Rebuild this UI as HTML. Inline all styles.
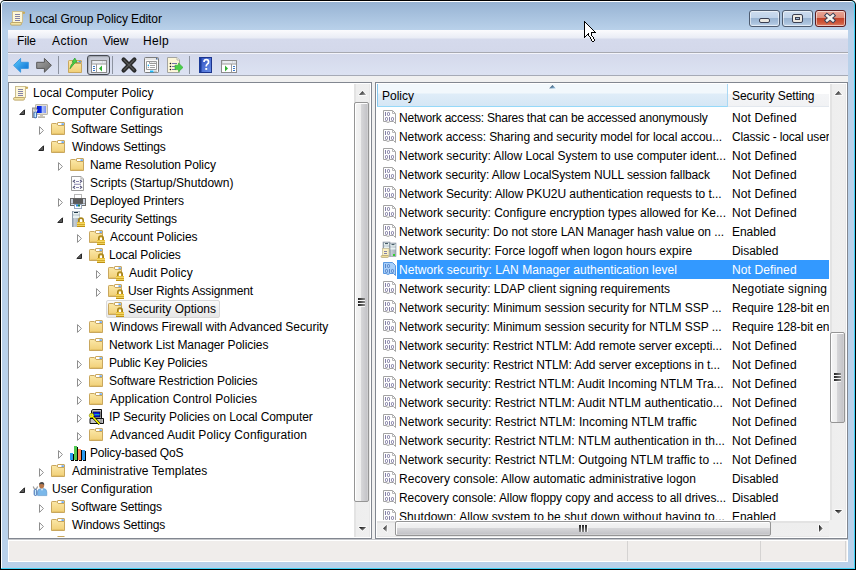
<!DOCTYPE html><html><head><meta charset="utf-8"><style>
*{box-sizing:border-box}
html,body{margin:0;padding:0;width:856px;height:570px;overflow:hidden;background:#fff;font-family:"Liberation Sans", sans-serif;font-size:12px;color:#000}
.a{position:absolute}
.t{position:absolute;white-space:pre;line-height:14px;height:14px}
svg{position:absolute;overflow:visible}

</style></head><body>
<div class="a" style="left:0;top:0;width:856px;height:570px;background:#000;border-radius:5px 5px 0 0"></div>
<div class="a" style="left:1px;top:1px;width:854px;height:568px;background:#40d2f6;border-radius:4px 4px 0 0"></div>
<div class="a" style="left:1px;top:1px;width:853px;height:567px;background:#fff;border-radius:4px 4px 0 0"></div>
<div class="a" style="left:2px;top:2px;width:852px;height:566px;background:#b9d1ea;border-radius:3px 3px 0 0"></div>
<div class="a" style="left:2px;top:2px;width:852px;height:28px;background:linear-gradient(#97b3d3,#b9d1ea);border-radius:3px 3px 0 0"></div>
<svg style="left:10px;top:10px" width="16" height="16"><use href="#i-scroll"/></svg>
<div class="t" style="left:29px;top:12px;letter-spacing:-0.1042px;">Local Group Policy Editor</div>
<div class="a" style="left:749px;top:10px;width:31px;height:17px;border:1px solid #4e5b6f;border-radius:3px;background:linear-gradient(#cddcee 0%,#bfd2e9 47%,#9ab4d2 50%,#a9c1dc 80%,#c2d6ec 100%);box-shadow:inset 0 0 0 1px rgba(255,255,255,0.55)"></div>
<div class="a" style="left:782px;top:10px;width:31px;height:17px;border:1px solid #4e5b6f;border-radius:3px;background:linear-gradient(#cddcee 0%,#bfd2e9 47%,#9ab4d2 50%,#a9c1dc 80%,#c2d6ec 100%);box-shadow:inset 0 0 0 1px rgba(255,255,255,0.55)"></div>
<div class="a" style="left:815px;top:10px;width:31px;height:17px;border:1px solid #5b1c20;border-radius:3px;background:linear-gradient(#eaa697 0%,#dd8b78 47%,#c4432a 50%,#cf5a3e 80%,#e0826a 100%);box-shadow:inset 0 0 0 1px rgba(255,255,255,0.55)"></div>
<div class="a" style="left:759px;top:18px;width:11px;height:5px;border:1px solid #3a3f52;border-radius:2px;background:#ece9e2"></div>
<div class="a" style="left:792px;top:14px;width:11px;height:9px;border:1px solid #3a3f52;border-radius:2px;background:#ece9e2"></div>
<div class="a" style="left:795px;top:17px;width:5px;height:3px;border:1px solid #3a3f52;background:#9fb7d4"></div>
<svg style="left:824px;top:13px" width="12" height="10" viewBox="0 0 12 10"><path d="M3 2.5 L9 7.5 M9 2.5 L3 7.5" stroke="#3b3f55" stroke-width="4.4" stroke-linecap="square"/><path d="M3 2.5 L9 7.5 M9 2.5 L3 7.5" stroke="#f4f2ee" stroke-width="2.4" stroke-linecap="square"/></svg>
<div class="a" style="left:8px;top:30px;width:840px;height:532px;background:#f0f0f0"></div>
<div class="a" style="left:8px;top:30px;width:840px;height:22px;background:linear-gradient(#fbfbfd 0px,#e9ecf5 8px,#d5daec 9px,#d3d8ea 22px)"></div>
<div class="a" style="left:8px;top:52px;width:840px;height:1px;background:#a7a9b0"></div>
<div class="a" style="left:8px;top:53px;width:840px;height:1px;background:#f3f4fa"></div>
<div class="t" style="left:17px;top:34px;letter-spacing:-0.1667px;">File</div>
<div class="t" style="left:52px;top:34px;letter-spacing:0.4000px;">Action</div>
<div class="t" style="left:103px;top:34px;letter-spacing:-0.1667px;">View</div>
<div class="t" style="left:143px;top:34px;letter-spacing:0.3333px;">Help</div>
<div class="a" style="left:8px;top:54px;width:840px;height:21px;background:linear-gradient(#d4d9eb,#dce2f2)"></div>
<div class="a" style="left:8px;top:75px;width:840px;height:1px;background:#a6aab6"></div>
<svg style="left:13px;top:57px" width="16" height="16"><use href="#i-back"/></svg>
<svg style="left:36px;top:57px" width="16" height="16"><use href="#i-fwd"/></svg>
<div class="a" style="left:58px;top:56px;width:1px;height:18px;background:#8d93a0"></div>
<svg style="left:68px;top:57px" width="16" height="16"><use href="#i-up"/></svg>
<div class="a" style="left:87px;top:55px;width:23px;height:20px;border:1px solid #464a52;border-radius:3px;background:linear-gradient(#c2c6d2,#d8dce8);box-shadow:inset 1px 1px 1px rgba(0,0,0,0.18)"></div>
<svg style="left:91px;top:60px" width="16" height="16"><use href="#i-tree"/></svg>
<div class="a" style="left:112px;top:56px;width:1px;height:18px;background:#8d93a0"></div>
<svg style="left:121px;top:57px" width="16" height="16"><use href="#i-delete"/></svg>
<svg style="left:144px;top:57px" width="16" height="16"><use href="#i-props"/></svg>
<svg style="left:167px;top:57px" width="16" height="16"><use href="#i-export"/></svg>
<div class="a" style="left:189px;top:56px;width:1px;height:18px;background:#8d93a0"></div>
<svg style="left:199px;top:57px" width="16" height="16"><use href="#i-help"/></svg>
<svg style="left:221px;top:60px" width="16" height="16"><use href="#i-action"/></svg>
<div class="a" style="left:8px;top:82px;width:364px;height:457px;border:1px solid #828790;background:#fff;overflow:hidden">
<svg style="left:4px;top:2px" width="16" height="16"><use href="#i-scroll"/></svg>
<div class="t" style="left:24px;top:3px;letter-spacing:0.0250px;">Local Computer Policy</div>
<svg style="left:10px;top:26px" width="8" height="8"><path d="M5.5 0.8 V5.5 H0.8 Z" fill="#5a5a5a" stroke="#262626" stroke-linejoin="round"/></svg>
<svg style="left:23px;top:20px" width="16" height="16"><use href="#i-computer"/></svg>
<div class="t" style="left:43px;top:21px;letter-spacing:0.1905px;">Computer Configuration</div>
<svg style="left:29px;top:43px" width="7" height="10"><path d="M1.5 0.6 L5.4 4.5 L1.5 8.4 Z" fill="#fff" stroke="#8e8e8e" stroke-linejoin="round"/></svg>
<svg style="left:42px;top:38px" width="16" height="16"><use href="#i-folder"/></svg>
<div class="t" style="left:62px;top:39px;letter-spacing:-0.1562px;">Software Settings</div>
<svg style="left:29px;top:62px" width="8" height="8"><path d="M5.5 0.8 V5.5 H0.8 Z" fill="#5a5a5a" stroke="#262626" stroke-linejoin="round"/></svg>
<svg style="left:42px;top:56px" width="16" height="16"><use href="#i-folder"/></svg>
<div class="t" style="left:63px;top:57px;letter-spacing:-0.1000px;">Windows Settings</div>
<svg style="left:48px;top:79px" width="7" height="10"><path d="M1.5 0.6 L5.4 4.5 L1.5 8.4 Z" fill="#fff" stroke="#8e8e8e" stroke-linejoin="round"/></svg>
<svg style="left:61px;top:74px" width="16" height="16"><use href="#i-folder"/></svg>
<div class="t" style="left:81px;top:75px;letter-spacing:-0.0714px;">Name Resolution Policy</div>
<svg style="left:61px;top:92px" width="16" height="16"><use href="#i-script"/></svg>
<div class="t" style="left:81px;top:93px;letter-spacing:0.0000px;">Scripts (Startup/Shutdown)</div>
<svg style="left:48px;top:115px" width="7" height="10"><path d="M1.5 0.6 L5.4 4.5 L1.5 8.4 Z" fill="#fff" stroke="#8e8e8e" stroke-linejoin="round"/></svg>
<svg style="left:61px;top:110px" width="16" height="16"><use href="#i-printer"/></svg>
<div class="t" style="left:81px;top:111px;letter-spacing:-0.0937px;">Deployed Printers</div>
<svg style="left:48px;top:134px" width="8" height="8"><path d="M5.5 0.8 V5.5 H0.8 Z" fill="#5a5a5a" stroke="#262626" stroke-linejoin="round"/></svg>
<svg style="left:61px;top:128px" width="16" height="16"><use href="#i-secset"/></svg>
<div class="t" style="left:81px;top:129px;letter-spacing:-0.1875px;">Security Settings</div>
<svg style="left:67px;top:151px" width="7" height="10"><path d="M1.5 0.6 L5.4 4.5 L1.5 8.4 Z" fill="#fff" stroke="#8e8e8e" stroke-linejoin="round"/></svg>
<svg style="left:80px;top:146px" width="16" height="16"><use href="#i-lockfolder"/></svg>
<div class="t" style="left:101px;top:147px;letter-spacing:-0.0333px;">Account Policies</div>
<svg style="left:67px;top:170px" width="8" height="8"><path d="M5.5 0.8 V5.5 H0.8 Z" fill="#5a5a5a" stroke="#262626" stroke-linejoin="round"/></svg>
<svg style="left:80px;top:164px" width="16" height="16"><use href="#i-lockfolder"/></svg>
<div class="t" style="left:100px;top:165px;letter-spacing:-0.1154px;">Local Policies</div>
<svg style="left:86px;top:187px" width="7" height="10"><path d="M1.5 0.6 L5.4 4.5 L1.5 8.4 Z" fill="#fff" stroke="#8e8e8e" stroke-linejoin="round"/></svg>
<svg style="left:99px;top:182px" width="16" height="16"><use href="#i-lockfolder"/></svg>
<div class="t" style="left:120px;top:183px;letter-spacing:0.0909px;">Audit Policy</div>
<svg style="left:86px;top:205px" width="7" height="10"><path d="M1.5 0.6 L5.4 4.5 L1.5 8.4 Z" fill="#fff" stroke="#8e8e8e" stroke-linejoin="round"/></svg>
<svg style="left:99px;top:200px" width="16" height="16"><use href="#i-lockfolder"/></svg>
<div class="t" style="left:119px;top:201px;letter-spacing:-0.1429px;">User Rights Assignment</div>
<div class="a" style="left:97px;top:217px;width:114px;height:18px;border:1px solid #d9d9d9;border-radius:2px;background:linear-gradient(#fafafa,#e6e6e6)"></div>
<svg style="left:99px;top:218px" width="16" height="16"><use href="#i-lockfolder"/></svg>
<div class="t" style="left:119px;top:219px;letter-spacing:0.0000px;">Security Options</div>
<svg style="left:67px;top:241px" width="7" height="10"><path d="M1.5 0.6 L5.4 4.5 L1.5 8.4 Z" fill="#fff" stroke="#8e8e8e" stroke-linejoin="round"/></svg>
<svg style="left:80px;top:236px" width="16" height="16"><use href="#i-folder"/></svg>
<div class="t" style="left:101px;top:237px;letter-spacing:-0.0658px;">Windows Firewall with Advanced Security</div>
<svg style="left:80px;top:254px" width="16" height="16"><use href="#i-folder"/></svg>
<div class="t" style="left:100px;top:255px;letter-spacing:-0.0714px;">Network List Manager Policies</div>
<svg style="left:67px;top:277px" width="7" height="10"><path d="M1.5 0.6 L5.4 4.5 L1.5 8.4 Z" fill="#fff" stroke="#8e8e8e" stroke-linejoin="round"/></svg>
<svg style="left:80px;top:272px" width="16" height="16"><use href="#i-folder"/></svg>
<div class="t" style="left:100px;top:273px;letter-spacing:-0.1667px;">Public Key Policies</div>
<svg style="left:67px;top:295px" width="7" height="10"><path d="M1.5 0.6 L5.4 4.5 L1.5 8.4 Z" fill="#fff" stroke="#8e8e8e" stroke-linejoin="round"/></svg>
<svg style="left:80px;top:290px" width="16" height="16"><use href="#i-folder"/></svg>
<div class="t" style="left:100px;top:291px;letter-spacing:-0.1250px;">Software Restriction Policies</div>
<svg style="left:67px;top:313px" width="7" height="10"><path d="M1.5 0.6 L5.4 4.5 L1.5 8.4 Z" fill="#fff" stroke="#8e8e8e" stroke-linejoin="round"/></svg>
<svg style="left:80px;top:308px" width="16" height="16"><use href="#i-folder"/></svg>
<div class="t" style="left:101px;top:309px;letter-spacing:0.0556px;">Application Control Policies</div>
<svg style="left:67px;top:331px" width="7" height="10"><path d="M1.5 0.6 L5.4 4.5 L1.5 8.4 Z" fill="#fff" stroke="#8e8e8e" stroke-linejoin="round"/></svg>
<svg style="left:80px;top:326px" width="16" height="16"><use href="#i-ipsec"/></svg>
<div class="t" style="left:100px;top:327px;letter-spacing:-0.0946px;">IP Security Policies on Local Computer</div>
<svg style="left:67px;top:349px" width="7" height="10"><path d="M1.5 0.6 L5.4 4.5 L1.5 8.4 Z" fill="#fff" stroke="#8e8e8e" stroke-linejoin="round"/></svg>
<svg style="left:80px;top:344px" width="16" height="16"><use href="#i-folder"/></svg>
<div class="t" style="left:101px;top:345px;letter-spacing:0.1029px;">Advanced Audit Policy Configuration</div>
<svg style="left:48px;top:367px" width="7" height="10"><path d="M1.5 0.6 L5.4 4.5 L1.5 8.4 Z" fill="#fff" stroke="#8e8e8e" stroke-linejoin="round"/></svg>
<svg style="left:61px;top:362px" width="16" height="16"><use href="#i-qos"/></svg>
<div class="t" style="left:81px;top:363px;letter-spacing:-0.1667px;">Policy-based QoS</div>
<svg style="left:29px;top:385px" width="7" height="10"><path d="M1.5 0.6 L5.4 4.5 L1.5 8.4 Z" fill="#fff" stroke="#8e8e8e" stroke-linejoin="round"/></svg>
<svg style="left:42px;top:380px" width="16" height="16"><use href="#i-folder"/></svg>
<div class="t" style="left:63px;top:381px;letter-spacing:0.0870px;">Administrative Templates</div>
<svg style="left:10px;top:404px" width="8" height="8"><path d="M5.5 0.8 V5.5 H0.8 Z" fill="#5a5a5a" stroke="#262626" stroke-linejoin="round"/></svg>
<svg style="left:23px;top:398px" width="16" height="16"><use href="#i-user"/></svg>
<div class="t" style="left:43px;top:399px;letter-spacing:0.0294px;">User Configuration</div>
<svg style="left:29px;top:421px" width="7" height="10"><path d="M1.5 0.6 L5.4 4.5 L1.5 8.4 Z" fill="#fff" stroke="#8e8e8e" stroke-linejoin="round"/></svg>
<svg style="left:42px;top:416px" width="16" height="16"><use href="#i-folder"/></svg>
<div class="t" style="left:62px;top:417px;letter-spacing:-0.1875px;">Software Settings</div>
<svg style="left:29px;top:439px" width="7" height="10"><path d="M1.5 0.6 L5.4 4.5 L1.5 8.4 Z" fill="#fff" stroke="#8e8e8e" stroke-linejoin="round"/></svg>
<svg style="left:42px;top:434px" width="16" height="16"><use href="#i-folder"/></svg>
<div class="t" style="left:63px;top:435px;letter-spacing:-0.1333px;">Windows Settings</div>
<svg style="left:29px;top:457px" width="7" height="10"><path d="M1.5 0.6 L5.4 4.5 L1.5 8.4 Z" fill="#fff" stroke="#8e8e8e" stroke-linejoin="round"/></svg>
<svg style="left:42px;top:452px" width="16" height="16"><use href="#i-folder"/></svg>
<div class="t" style="left:63px;top:453px;">Administrative Templates</div>
<div class="a" style="left:0;top:454px;width:345px;height:1px;background:#fff"></div>
<div class="a" style="left:345px;top:1px;width:16px;height:453px;background:linear-gradient(90deg,#e3e3e3 0,#e3e3e3 2px,#eeeeee 2px,#efefef 15px,#e8e8e8 15px)"></div>
<svg style="left:349px;top:7px" width="9" height="9"><defs><linearGradient id="ag358_90" x1="0" y1="0" x2="1" y2="1"><stop offset="0" stop-color="#000"/><stop offset="1" stop-color="#b4b4b4"/></linearGradient></defs><path d="M0.8 5 L4.5 1 L8.2 5 Z" fill="none" stroke="#fff" stroke-width="1.6" stroke-linejoin="round" opacity="0.9"/><path d="M0.8 5 L4.5 1 L8.2 5 Z" fill="url(#ag358_90)"/></svg>
<svg style="left:349px;top:443px" width="9" height="9"><defs><linearGradient id="ag358_526" x1="0" y1="0" x2="1" y2="1"><stop offset="0" stop-color="#000"/><stop offset="1" stop-color="#b4b4b4"/></linearGradient></defs><path d="M0.8 1 L8.2 1 L4.5 4.8 Z" fill="none" stroke="#fff" stroke-width="1.6" stroke-linejoin="round" opacity="0.9"/><path d="M0.8 1 L8.2 1 L4.5 4.8 Z" fill="url(#ag358_526)"/></svg>
<div class="a" style="left:345px;top:19px;width:15px;height:400px;border:1px solid #959595;border-radius:2px;background:linear-gradient(90deg,#f5f5f5 0%,#eeeeee 45%,#d6d6d8 50%,#c4c4c8 92%,#dadada 100%);box-shadow:inset 1px 1px 0 #fff"></div>
<div class="a" style="left:349px;top:215px;width:7px;height:2px;background:linear-gradient(90deg,#202020,#8a8a8a);box-shadow:0 1px 0 rgba(255,255,255,0.8)"></div>
<div class="a" style="left:349px;top:218px;width:7px;height:2px;background:linear-gradient(90deg,#202020,#8a8a8a);box-shadow:0 1px 0 rgba(255,255,255,0.8)"></div>
<div class="a" style="left:349px;top:221px;width:7px;height:2px;background:linear-gradient(90deg,#202020,#8a8a8a);box-shadow:0 1px 0 rgba(255,255,255,0.8)"></div>
</div>
<div class="a" style="left:375px;top:82px;width:473px;height:457px;border:1px solid #828790;background:#fff;overflow:hidden">
<div class="a" style="left:1px;top:1px;width:350px;height:22px;border-left:1px solid #88c8ee;background:linear-gradient(#f2f8fc 0,#f2f8fc 9px,#dfedf8 10px,#d5e7f5 22px)"></div>
<div class="a" style="left:1px;top:23px;width:350px;height:1px;background:#96d9f9"></div>
<div class="a" style="left:351px;top:1px;width:1px;height:23px;background:#a9d8f4"></div>
<div class="a" style="left:352px;top:1px;width:101px;height:22px;background:linear-gradient(#fff 0,#fff 10px,#f4f5f7 10px,#f1f2f4 22px)"></div>
<div class="a" style="left:352px;top:23px;width:101px;height:1px;background:#e3e8ee"></div>
<svg style="left:172px;top:1px" width="9" height="6"><defs><linearGradient id="sortg" x1="0" y1="0" x2="1" y2="1"><stop offset="0" stop-color="#0a2a4a"/><stop offset="1" stop-color="#b0dcfa"/></linearGradient></defs><path d="M1 4.6 L4.5 1 L8 4.6 Z" fill="none" stroke="#fff" stroke-width="1.4" stroke-linejoin="round" opacity="0.8"/><path d="M1 4.6 L4.5 1 L8 4.6 Z" fill="url(#sortg)"/></svg>
<div class="t" style="left:6px;top:6px;">Policy</div>
<div class="t" style="left:356px;top:6px;letter-spacing:-0.1000px;">Security Setting</div>
<svg style="left:6px;top:27px" width="16" height="16"><use href="#i-bin"/></svg>
<div class="t" style="left:23px;top:28px;color:#000;letter-spacing:-0.2130px;">Network access: Shares that can be accessed anonymously</div>
<div class="a" style="left:356px;top:28px;width:97px;height:14px;overflow:hidden"><div class="t" style="left:0;top:0;color:#000;letter-spacing:0.12px">Not Defined</div></div>
<svg style="left:6px;top:46px" width="16" height="16"><use href="#i-bin"/></svg>
<div class="t" style="left:23px;top:47px;color:#000;letter-spacing:-0.0750px;">Network access: Sharing and security model for local accou...</div>
<div class="a" style="left:356px;top:47px;width:97px;height:14px;overflow:hidden"><div class="t" style="left:0;top:0;color:#000;letter-spacing:-0.16px">Classic - local users and groups</div></div>
<svg style="left:6px;top:65px" width="16" height="16"><use href="#i-bin"/></svg>
<div class="t" style="left:23px;top:66px;color:#000;letter-spacing:-0.0083px;">Network security: Allow Local System to use computer ident...</div>
<div class="a" style="left:356px;top:66px;width:97px;height:14px;overflow:hidden"><div class="t" style="left:0;top:0;color:#000;letter-spacing:0.12px">Not Defined</div></div>
<svg style="left:6px;top:84px" width="16" height="16"><use href="#i-bin"/></svg>
<div class="t" style="left:23px;top:85px;color:#000;letter-spacing:-0.1071px;">Network security: Allow LocalSystem NULL session fallback</div>
<div class="a" style="left:356px;top:85px;width:97px;height:14px;overflow:hidden"><div class="t" style="left:0;top:0;color:#000;letter-spacing:0.12px">Not Defined</div></div>
<svg style="left:6px;top:103px" width="16" height="16"><use href="#i-bin"/></svg>
<div class="t" style="left:23px;top:104px;color:#000;letter-spacing:-0.0583px;">Network Security: Allow PKU2U authentication requests to t...</div>
<div class="a" style="left:356px;top:104px;width:97px;height:14px;overflow:hidden"><div class="t" style="left:0;top:0;color:#000;letter-spacing:0.12px">Not Defined</div></div>
<svg style="left:6px;top:122px" width="16" height="16"><use href="#i-bin"/></svg>
<div class="t" style="left:23px;top:123px;color:#000;letter-spacing:-0.0082px;">Network security: Configure encryption types allowed for Ke...</div>
<div class="a" style="left:356px;top:123px;width:97px;height:14px;overflow:hidden"><div class="t" style="left:0;top:0;color:#000;letter-spacing:0.12px">Not Defined</div></div>
<svg style="left:6px;top:141px" width="16" height="16"><use href="#i-bin"/></svg>
<div class="t" style="left:23px;top:142px;color:#000;letter-spacing:-0.0763px;">Network security: Do not store LAN Manager hash value on ...</div>
<div class="a" style="left:356px;top:142px;width:97px;height:14px;overflow:hidden"><div class="t" style="left:0;top:0;color:#000;letter-spacing:-0.03px">Enabled</div></div>
<svg style="left:6px;top:160px" width="16" height="16"><use href="#i-srv"/></svg>
<div class="t" style="left:23px;top:161px;color:#000;letter-spacing:0.0094px;">Network security: Force logoff when logon hours expire</div>
<div class="a" style="left:356px;top:161px;width:97px;height:14px;overflow:hidden"><div class="t" style="left:0;top:0;color:#000;letter-spacing:-0.05px">Disabled</div></div>
<div class="a" style="left:21px;top:177px;width:432px;height:19px;background:#3399ff"></div>
<svg style="left:6px;top:179px" width="16" height="16"><use href="#i-binsel"/></svg>
<div class="t" style="left:23px;top:180px;color:#fff;letter-spacing:0.0510px;">Network security: LAN Manager authentication level</div>
<div class="a" style="left:356px;top:180px;width:97px;height:14px;overflow:hidden"><div class="t" style="left:0;top:0;color:#fff;letter-spacing:0.12px">Not Defined</div></div>
<svg style="left:6px;top:198px" width="16" height="16"><use href="#i-bin"/></svg>
<div class="t" style="left:23px;top:199px;color:#000;letter-spacing:-0.0306px;">Network security: LDAP client signing requirements</div>
<div class="a" style="left:356px;top:199px;width:97px;height:14px;overflow:hidden"><div class="t" style="left:0;top:0;color:#000;letter-spacing:0.14px">Negotiate signing</div></div>
<svg style="left:6px;top:217px" width="16" height="16"><use href="#i-bin"/></svg>
<div class="t" style="left:23px;top:218px;color:#000;letter-spacing:-0.0690px;">Network security: Minimum session security for NTLM SSP ...</div>
<div class="a" style="left:356px;top:218px;width:97px;height:14px;overflow:hidden"><div class="t" style="left:0;top:0;color:#000;letter-spacing:-0.07px">Require 128-bit encryption</div></div>
<svg style="left:6px;top:236px" width="16" height="16"><use href="#i-bin"/></svg>
<div class="t" style="left:23px;top:237px;color:#000;letter-spacing:-0.0690px;">Network security: Minimum session security for NTLM SSP ...</div>
<div class="a" style="left:356px;top:237px;width:97px;height:14px;overflow:hidden"><div class="t" style="left:0;top:0;color:#000;letter-spacing:-0.07px">Require 128-bit encryption</div></div>
<svg style="left:6px;top:255px" width="16" height="16"><use href="#i-bin"/></svg>
<div class="t" style="left:23px;top:256px;color:#000;letter-spacing:-0.0833px;">Network security: Restrict NTLM: Add remote server excepti...</div>
<div class="a" style="left:356px;top:256px;width:97px;height:14px;overflow:hidden"><div class="t" style="left:0;top:0;color:#000;letter-spacing:0.12px">Not Defined</div></div>
<svg style="left:6px;top:274px" width="16" height="16"><use href="#i-bin"/></svg>
<div class="t" style="left:23px;top:275px;color:#000;letter-spacing:-0.0820px;">Network security: Restrict NTLM: Add server exceptions in t...</div>
<div class="a" style="left:356px;top:275px;width:97px;height:14px;overflow:hidden"><div class="t" style="left:0;top:0;color:#000;letter-spacing:0.12px">Not Defined</div></div>
<svg style="left:6px;top:293px" width="16" height="16"><use href="#i-bin"/></svg>
<div class="t" style="left:23px;top:294px;color:#000;letter-spacing:0.0086px;">Network security: Restrict NTLM: Audit Incoming NTLM Tra...</div>
<div class="a" style="left:356px;top:294px;width:97px;height:14px;overflow:hidden"><div class="t" style="left:0;top:0;color:#000;letter-spacing:0.12px">Not Defined</div></div>
<svg style="left:6px;top:312px" width="16" height="16"><use href="#i-bin"/></svg>
<div class="t" style="left:23px;top:313px;color:#000;letter-spacing:0.0169px;">Network security: Restrict NTLM: Audit NTLM authenticatio...</div>
<div class="a" style="left:356px;top:313px;width:97px;height:14px;overflow:hidden"><div class="t" style="left:0;top:0;color:#000;letter-spacing:0.12px">Not Defined</div></div>
<svg style="left:6px;top:331px" width="16" height="16"><use href="#i-bin"/></svg>
<div class="t" style="left:23px;top:332px;color:#000;letter-spacing:0.0377px;">Network security: Restrict NTLM: Incoming NTLM traffic</div>
<div class="a" style="left:356px;top:332px;width:97px;height:14px;overflow:hidden"><div class="t" style="left:0;top:0;color:#000;letter-spacing:0.12px">Not Defined</div></div>
<svg style="left:6px;top:350px" width="16" height="16"><use href="#i-bin"/></svg>
<div class="t" style="left:23px;top:351px;color:#000;letter-spacing:0.0083px;">Network security: Restrict NTLM: NTLM authentication in th...</div>
<div class="a" style="left:356px;top:351px;width:97px;height:14px;overflow:hidden"><div class="t" style="left:0;top:0;color:#000;letter-spacing:0.12px">Not Defined</div></div>
<svg style="left:6px;top:369px" width="16" height="16"><use href="#i-bin"/></svg>
<div class="t" style="left:23px;top:370px;color:#000;letter-spacing:0.0167px;">Network security: Restrict NTLM: Outgoing NTLM traffic to ...</div>
<div class="a" style="left:356px;top:370px;width:97px;height:14px;overflow:hidden"><div class="t" style="left:0;top:0;color:#000;letter-spacing:0.12px">Not Defined</div></div>
<svg style="left:6px;top:388px" width="16" height="16"><use href="#i-bin"/></svg>
<div class="t" style="left:23px;top:389px;color:#000;letter-spacing:0.0283px;">Recovery console: Allow automatic administrative logon</div>
<div class="a" style="left:356px;top:389px;width:97px;height:14px;overflow:hidden"><div class="t" style="left:0;top:0;color:#000;letter-spacing:-0.05px">Disabled</div></div>
<svg style="left:6px;top:407px" width="16" height="16"><use href="#i-bin"/></svg>
<div class="t" style="left:23px;top:408px;color:#000;letter-spacing:-0.0806px;">Recovery console: Allow floppy copy and access to all drives...</div>
<div class="a" style="left:356px;top:408px;width:97px;height:14px;overflow:hidden"><div class="t" style="left:0;top:0;color:#000;letter-spacing:-0.05px">Disabled</div></div>
<svg style="left:6px;top:426px" width="16" height="16"><use href="#i-bin"/></svg>
<div class="t" style="left:23px;top:427px;color:#000;letter-spacing:0.0870px;">Shutdown: Allow system to be shut down without having to...</div>
<div class="a" style="left:356px;top:427px;width:97px;height:14px;overflow:hidden"><div class="t" style="left:0;top:0;color:#000;letter-spacing:-0.03px">Enabled</div></div>
<div class="a" style="left:454px;top:1px;width:16px;height:436px;background:linear-gradient(90deg,#e3e3e3 0,#e3e3e3 2px,#eeeeee 2px,#efefef 15px,#e8e8e8 15px)"></div>
<svg style="left:458px;top:7px" width="9" height="9"><defs><linearGradient id="ag834_90" x1="0" y1="0" x2="1" y2="1"><stop offset="0" stop-color="#000"/><stop offset="1" stop-color="#b4b4b4"/></linearGradient></defs><path d="M0.8 5 L4.5 1 L8.2 5 Z" fill="none" stroke="#fff" stroke-width="1.6" stroke-linejoin="round" opacity="0.9"/><path d="M0.8 5 L4.5 1 L8.2 5 Z" fill="url(#ag834_90)"/></svg>
<svg style="left:458px;top:426px" width="9" height="9"><defs><linearGradient id="ag834_509" x1="0" y1="0" x2="1" y2="1"><stop offset="0" stop-color="#000"/><stop offset="1" stop-color="#b4b4b4"/></linearGradient></defs><path d="M0.8 1 L8.2 1 L4.5 4.8 Z" fill="none" stroke="#fff" stroke-width="1.6" stroke-linejoin="round" opacity="0.9"/><path d="M0.8 1 L8.2 1 L4.5 4.8 Z" fill="url(#ag834_509)"/></svg>
<div class="a" style="left:454px;top:249px;width:15px;height:91px;border:1px solid #959595;border-radius:2px;background:linear-gradient(90deg,#f5f5f5 0%,#eeeeee 45%,#d6d6d8 50%,#c4c4c8 92%,#dadada 100%);box-shadow:inset 1px 1px 0 #fff"></div>
<div class="a" style="left:458px;top:290px;width:7px;height:2px;background:linear-gradient(90deg,#202020,#8a8a8a);box-shadow:0 1px 0 rgba(255,255,255,0.8)"></div>
<div class="a" style="left:458px;top:293px;width:7px;height:2px;background:linear-gradient(90deg,#202020,#8a8a8a);box-shadow:0 1px 0 rgba(255,255,255,0.8)"></div>
<div class="a" style="left:458px;top:296px;width:7px;height:2px;background:linear-gradient(90deg,#202020,#8a8a8a);box-shadow:0 1px 0 rgba(255,255,255,0.8)"></div>
<div class="a" style="left:1px;top:437px;width:452px;height:1px;background:#fff"></div>
<div class="a" style="left:1px;top:438px;width:452px;height:16px;background:linear-gradient(#e3e3e3 0,#e3e3e3 2px,#eeeeee 2px,#efefef 15px,#e8e8e8 15px)"></div>
<div class="a" style="left:453px;top:437px;width:17px;height:17px;background:#f0f0f0"></div>
<svg style="left:6px;top:441px" width="9" height="9"><defs><linearGradient id="ag382_524" x1="0" y1="0" x2="1" y2="1"><stop offset="0" stop-color="#000"/><stop offset="1" stop-color="#b4b4b4"/></linearGradient></defs><path d="M1 4.4 L4.8 0.8 L4.8 8 Z" fill="none" stroke="#fff" stroke-width="1.6" stroke-linejoin="round" opacity="0.9"/><path d="M1 4.4 L4.8 0.8 L4.8 8 Z" fill="url(#ag382_524)"/></svg>
<svg style="left:442px;top:441px" width="9" height="9"><defs><linearGradient id="ag818_524" x1="0" y1="0" x2="1" y2="1"><stop offset="0" stop-color="#000"/><stop offset="1" stop-color="#b4b4b4"/></linearGradient></defs><path d="M1 0.8 L1 8 L4.8 4.4 Z" fill="none" stroke="#fff" stroke-width="1.6" stroke-linejoin="round" opacity="0.9"/><path d="M1 0.8 L1 8 L4.8 4.4 Z" fill="url(#ag818_524)"/></svg>
<div class="a" style="left:19px;top:438px;width:376px;height:15px;border:1px solid #959595;border-radius:2px;background:linear-gradient(#f5f5f5 0%,#eeeeee 45%,#d6d6d8 50%,#c4c4c8 92%,#dadada 100%);box-shadow:inset 1px 1px 0 #fff"></div>
<div class="a" style="left:203px;top:442px;width:2px;height:7px;background:linear-gradient(#202020,#8a8a8a);box-shadow:1px 0 0 rgba(255,255,255,0.8)"></div>
<div class="a" style="left:206px;top:442px;width:2px;height:7px;background:linear-gradient(#202020,#8a8a8a);box-shadow:1px 0 0 rgba(255,255,255,0.8)"></div>
<div class="a" style="left:209px;top:442px;width:2px;height:7px;background:linear-gradient(#202020,#8a8a8a);box-shadow:1px 0 0 rgba(255,255,255,0.8)"></div>
</div>
<div class="a" style="left:8px;top:539px;width:840px;height:1px;background:#c4c6ca"></div>
<div class="a" style="left:8px;top:540px;width:840px;height:22px;background:#fff"></div>
<div class="a" style="left:9px;top:541px;width:838px;height:20px;background:#f0edeb"></div>
<div class="a" style="left:627px;top:541px;width:1px;height:20px;background:#d5d3d2"></div>
<div class="a" style="left:760px;top:541px;width:1px;height:20px;background:#d5d3d2"></div>
<div class="a" style="left:845px;top:541px;width:1px;height:20px;background:#d5d3d2"></div>
<svg style="left:584px;top:21px" width="12" height="21" shape-rendering="crispEdges"><rect x="0" y="0" width="1" height="1" fill="#000"/><rect x="0" y="1" width="1" height="1" fill="#000"/><rect x="1" y="1" width="1" height="1" fill="#000"/><rect x="0" y="2" width="1" height="1" fill="#000"/><rect x="1" y="2" width="1" height="1" fill="#fff"/><rect x="2" y="2" width="1" height="1" fill="#000"/><rect x="0" y="3" width="1" height="1" fill="#000"/><rect x="1" y="3" width="1" height="1" fill="#fff"/><rect x="2" y="3" width="1" height="1" fill="#fff"/><rect x="3" y="3" width="1" height="1" fill="#000"/><rect x="0" y="4" width="1" height="1" fill="#000"/><rect x="1" y="4" width="1" height="1" fill="#fff"/><rect x="2" y="4" width="1" height="1" fill="#fff"/><rect x="3" y="4" width="1" height="1" fill="#fff"/><rect x="4" y="4" width="1" height="1" fill="#000"/><rect x="0" y="5" width="1" height="1" fill="#000"/><rect x="1" y="5" width="1" height="1" fill="#fff"/><rect x="2" y="5" width="1" height="1" fill="#fff"/><rect x="3" y="5" width="1" height="1" fill="#fff"/><rect x="4" y="5" width="1" height="1" fill="#fff"/><rect x="5" y="5" width="1" height="1" fill="#000"/><rect x="0" y="6" width="1" height="1" fill="#000"/><rect x="1" y="6" width="1" height="1" fill="#fff"/><rect x="2" y="6" width="1" height="1" fill="#fff"/><rect x="3" y="6" width="1" height="1" fill="#fff"/><rect x="4" y="6" width="1" height="1" fill="#fff"/><rect x="5" y="6" width="1" height="1" fill="#fff"/><rect x="6" y="6" width="1" height="1" fill="#000"/><rect x="0" y="7" width="1" height="1" fill="#000"/><rect x="1" y="7" width="1" height="1" fill="#fff"/><rect x="2" y="7" width="1" height="1" fill="#fff"/><rect x="3" y="7" width="1" height="1" fill="#fff"/><rect x="4" y="7" width="1" height="1" fill="#fff"/><rect x="5" y="7" width="1" height="1" fill="#fff"/><rect x="6" y="7" width="1" height="1" fill="#fff"/><rect x="7" y="7" width="1" height="1" fill="#000"/><rect x="0" y="8" width="1" height="1" fill="#000"/><rect x="1" y="8" width="1" height="1" fill="#fff"/><rect x="2" y="8" width="1" height="1" fill="#fff"/><rect x="3" y="8" width="1" height="1" fill="#fff"/><rect x="4" y="8" width="1" height="1" fill="#fff"/><rect x="5" y="8" width="1" height="1" fill="#fff"/><rect x="6" y="8" width="1" height="1" fill="#fff"/><rect x="7" y="8" width="1" height="1" fill="#fff"/><rect x="8" y="8" width="1" height="1" fill="#000"/><rect x="0" y="9" width="1" height="1" fill="#000"/><rect x="1" y="9" width="1" height="1" fill="#fff"/><rect x="2" y="9" width="1" height="1" fill="#fff"/><rect x="3" y="9" width="1" height="1" fill="#fff"/><rect x="4" y="9" width="1" height="1" fill="#fff"/><rect x="5" y="9" width="1" height="1" fill="#fff"/><rect x="6" y="9" width="1" height="1" fill="#fff"/><rect x="7" y="9" width="1" height="1" fill="#fff"/><rect x="8" y="9" width="1" height="1" fill="#fff"/><rect x="9" y="9" width="1" height="1" fill="#000"/><rect x="0" y="10" width="1" height="1" fill="#000"/><rect x="1" y="10" width="1" height="1" fill="#fff"/><rect x="2" y="10" width="1" height="1" fill="#fff"/><rect x="3" y="10" width="1" height="1" fill="#fff"/><rect x="4" y="10" width="1" height="1" fill="#fff"/><rect x="5" y="10" width="1" height="1" fill="#fff"/><rect x="6" y="10" width="1" height="1" fill="#fff"/><rect x="7" y="10" width="1" height="1" fill="#fff"/><rect x="8" y="10" width="1" height="1" fill="#fff"/><rect x="9" y="10" width="1" height="1" fill="#fff"/><rect x="10" y="10" width="1" height="1" fill="#000"/><rect x="0" y="11" width="1" height="1" fill="#000"/><rect x="1" y="11" width="1" height="1" fill="#fff"/><rect x="2" y="11" width="1" height="1" fill="#fff"/><rect x="3" y="11" width="1" height="1" fill="#fff"/><rect x="4" y="11" width="1" height="1" fill="#fff"/><rect x="5" y="11" width="1" height="1" fill="#fff"/><rect x="6" y="11" width="1" height="1" fill="#fff"/><rect x="7" y="11" width="1" height="1" fill="#000"/><rect x="8" y="11" width="1" height="1" fill="#000"/><rect x="9" y="11" width="1" height="1" fill="#000"/><rect x="10" y="11" width="1" height="1" fill="#000"/><rect x="11" y="11" width="1" height="1" fill="#000"/><rect x="0" y="12" width="1" height="1" fill="#000"/><rect x="1" y="12" width="1" height="1" fill="#fff"/><rect x="2" y="12" width="1" height="1" fill="#fff"/><rect x="3" y="12" width="1" height="1" fill="#fff"/><rect x="4" y="12" width="1" height="1" fill="#000"/><rect x="5" y="12" width="1" height="1" fill="#fff"/><rect x="6" y="12" width="1" height="1" fill="#fff"/><rect x="7" y="12" width="1" height="1" fill="#000"/><rect x="0" y="13" width="1" height="1" fill="#000"/><rect x="1" y="13" width="1" height="1" fill="#fff"/><rect x="2" y="13" width="1" height="1" fill="#fff"/><rect x="3" y="13" width="1" height="1" fill="#000"/><rect x="4" y="13" width="1" height="1" fill="#000"/><rect x="5" y="13" width="1" height="1" fill="#fff"/><rect x="6" y="13" width="1" height="1" fill="#fff"/><rect x="7" y="13" width="1" height="1" fill="#000"/><rect x="0" y="14" width="1" height="1" fill="#000"/><rect x="1" y="14" width="1" height="1" fill="#fff"/><rect x="2" y="14" width="1" height="1" fill="#000"/><rect x="4" y="14" width="1" height="1" fill="#000"/><rect x="5" y="14" width="1" height="1" fill="#fff"/><rect x="6" y="14" width="1" height="1" fill="#fff"/><rect x="7" y="14" width="1" height="1" fill="#000"/><rect x="0" y="15" width="1" height="1" fill="#000"/><rect x="1" y="15" width="1" height="1" fill="#000"/><rect x="5" y="15" width="1" height="1" fill="#000"/><rect x="6" y="15" width="1" height="1" fill="#fff"/><rect x="7" y="15" width="1" height="1" fill="#fff"/><rect x="8" y="15" width="1" height="1" fill="#000"/><rect x="0" y="16" width="1" height="1" fill="#000"/><rect x="6" y="16" width="1" height="1" fill="#000"/><rect x="7" y="16" width="1" height="1" fill="#fff"/><rect x="8" y="16" width="1" height="1" fill="#fff"/><rect x="9" y="16" width="1" height="1" fill="#000"/><rect x="6" y="17" width="1" height="1" fill="#000"/><rect x="7" y="17" width="1" height="1" fill="#fff"/><rect x="8" y="17" width="1" height="1" fill="#fff"/><rect x="9" y="17" width="1" height="1" fill="#000"/><rect x="7" y="18" width="1" height="1" fill="#000"/><rect x="8" y="18" width="1" height="1" fill="#fff"/><rect x="9" y="18" width="1" height="1" fill="#fff"/><rect x="10" y="18" width="1" height="1" fill="#000"/><rect x="7" y="19" width="1" height="1" fill="#000"/><rect x="8" y="19" width="1" height="1" fill="#fff"/><rect x="9" y="19" width="1" height="1" fill="#fff"/><rect x="10" y="19" width="1" height="1" fill="#000"/><rect x="8" y="20" width="1" height="1" fill="#000"/><rect x="9" y="20" width="1" height="1" fill="#000"/></svg>
<svg width="0" height="0" style="position:absolute;left:0;top:0"><defs>
<linearGradient id="gFold" x1="0" y1="0" x2="0" y2="1"><stop offset="0" stop-color="#fbe8a8"/><stop offset="1" stop-color="#f1cf76"/></linearGradient>
<linearGradient id="gLock" x1="0" y1="0" x2="0" y2="1"><stop offset="0" stop-color="#f0c840"/><stop offset="1" stop-color="#b88a10"/></linearGradient>
<linearGradient id="gScr" x1="0" y1="0" x2="1" y2="0"><stop offset="0" stop-color="#0010d0"/><stop offset="0.45" stop-color="#0830e8"/><stop offset="0.6" stop-color="#b0c0f8"/><stop offset="1" stop-color="#7890f0"/></linearGradient>
<linearGradient id="gBack" x1="0" y1="0" x2="1" y2="1"><stop offset="0" stop-color="#5cd0ff"/><stop offset="1" stop-color="#0868d0"/></linearGradient>
<linearGradient id="gFwd" x1="0" y1="0" x2="1" y2="1"><stop offset="0" stop-color="#a8a8a8"/><stop offset="1" stop-color="#686868"/></linearGradient>
<linearGradient id="gTow" x1="0" y1="0" x2="1" y2="0"><stop offset="0" stop-color="#8090a0"/><stop offset="0.3" stop-color="#c4ccd4"/><stop offset="1" stop-color="#a0acb8"/></linearGradient>
<linearGradient id="gHelp" x1="0" y1="0" x2="1" y2="1"><stop offset="0" stop-color="#3050c0"/><stop offset="1" stop-color="#6a90e8"/></linearGradient>

<symbol id="i-scroll" overflow="visible"><rect x="2.5" y="1.5" width="10" height="11" fill="#fdf7d8" stroke="#cdbf90"/><path d="M5 4.5h5M5 6.5h5M5 8.5h5M5 10.5h5" stroke="#8482a8"/><rect x="0.5" y="12.5" width="11" height="2.6" rx="1.3" fill="#f4e6a6" stroke="#bfa86a"/><circle cx="13.8" cy="2.8" r="1.3" fill="#c8aa58"/></symbol>

<symbol id="i-folder" overflow="visible"><path d="M6.5 4.5 V2 Q6.5 1.5 7 1.5 H13 Q13.5 1.5 13.5 2 V4.5 Z" fill="#fff" stroke="#c9a75e"/><rect x="10.5" y="2.4" width="2.4" height="1.4" fill="#4d94e8"/><path d="M0.5 13.5 V3.2 Q0.5 2.5 1.2 2.5 H5.3 L7.2 4.5 H13.5 V13.5 Z" fill="url(#gFold)" stroke="#c9a75e"/><path d="M1.5 12.5 H12.5" stroke="#e6c46a"/></symbol>

<symbol id="i-lock" overflow="visible"><path d="M9.8 11.5 V9.2 A2.2 2.2 0 0 1 14.2 9.2 V11.5" fill="none" stroke="#a88418" stroke-width="1.6"/><rect x="11" y="9" width="2" height="2" fill="#fff"/><rect x="8" y="11" width="8" height="5" fill="url(#gLock)"/><path d="M8 12.5h8M8 14.5h8" stroke="#f8e070" stroke-width="0.8"/></symbol>
<symbol id="i-lockfolder" overflow="visible"><use href="#i-folder"/><use href="#i-lock"/></symbol>

<symbol id="i-computer" overflow="visible"><rect x="3.5" y="1.5" width="12" height="10" rx="0.5" fill="#e2ded2" stroke="#bdb9ad"/><rect x="5" y="3" width="9" height="7" fill="url(#gScr)"/><rect x="8" y="11.5" width="3" height="2" fill="#c8c4b8"/><rect x="6" y="13.3" width="7" height="1.7" fill="#bcb8ac"/><rect x="0.5" y="5" width="4" height="9.5" fill="#b8b8b8" stroke="#909090"/><path d="M1.2 6.5 L2.5 8.5 H4 L5.3 6.5" fill="none" stroke="#e8e8e8" stroke-width="1.2"/><rect x="2" y="9" width="2.6" height="5.8" rx="1" fill="#c8ecfc" stroke="#3a66b0"/></symbol>

<symbol id="i-user" overflow="visible"><path d="M5.6 14.6 V11 Q5.6 7.5 9.5 7.5 H11 Q14.8 7.5 14.8 11 V14.6 Z" fill="#7ab8ea" stroke="#5a94c8" stroke-width="0.6"/><path d="M9 7.5 L10 10 L11 7.5" fill="#fff"/><ellipse cx="9.6" cy="4.6" rx="2.5" ry="3" fill="#b8784a"/><path d="M7 3.8 Q7.2 1 10 1 Q12.5 1.2 12.2 4.2 Q11 2.6 8 3.2 Z" fill="#4a4a4a"/><path d="M1.2 5.5 L2.4 8 H4.4 L5.6 5.5" fill="none" stroke="#9a9a9a" stroke-width="1.2"/><rect x="2.2" y="8.5" width="2.6" height="6" rx="1.2" fill="#c8ecfc" stroke="#3a66b0"/></symbol>

<symbol id="i-script" overflow="visible"><path d="M1.5 1.5 H11 L13.5 4 V15.5 H1.5 Z" fill="#fdfdfd" stroke="#9c9c9c"/><path d="M11 1.5 V4 H13.5" fill="#e8e8e8" stroke="#b0b0b0"/><path d="M5 5 L3.3 6.3 L5 7.6 M10 5 L11.7 6.3 L10 7.6 M5 11 L3.3 12.3 L5 13.6 M10 11 L11.7 12.3 L10 13.6" fill="none" stroke="#55557a" stroke-width="1.1"/><path d="M6 6.5 H9 M4 9.3 H11 M6 12.5 H9" stroke="#8a86b0" stroke-width="1.1"/></symbol>

<symbol id="i-printer" overflow="visible"><rect x="4.5" y="1.5" width="7" height="4" fill="#fff" stroke="#b8b8b8"/><rect x="0" y="5" width="16" height="8" fill="#6a6a6a"/><rect x="3" y="5.5" width="10" height="5" fill="#5a5a5a"/><rect x="1" y="6" width="2" height="4.5" fill="#c8d0dc"/><rect x="13" y="6" width="2" height="4.5" fill="#c8d0dc"/><rect x="1" y="11" width="14" height="1" fill="#d8e4f0"/><rect x="4.5" y="11.5" width="7" height="4" fill="#fff" stroke="#98a8c0"/><rect x="6" y="11.5" width="2" height="2" fill="#2a8ae8"/><rect x="8" y="11.5" width="2" height="2" fill="#1a7a40"/></symbol>

<symbol id="i-secset" overflow="visible"><rect x="2" y="0" width="8" height="16" fill="url(#gTow)"/><rect x="3" y="1" width="6.5" height="2.5" fill="#e8f2f2"/><rect x="4" y="1" width="4" height="1" fill="#203848"/><rect x="3" y="4.5" width="6.5" height="2.5" fill="#e8f2f2"/><path d="M8.8 11.5 V9.3 A2.2 2.2 0 0 1 13.2 9.3 V11.5" fill="none" stroke="#a88418" stroke-width="1.6"/><rect x="10" y="9" width="2" height="2" fill="#fff"/><rect x="7" y="11" width="8" height="5" fill="url(#gLock)"/><path d="M7 12.5h8M7 14.5h8" stroke="#f8e070" stroke-width="0.8"/></symbol>

<symbol id="i-ipsec" overflow="visible"><path d="M2.5 9.5 V2 L3.5 0.5 H12.5 V9.5 Z" fill="#c8c8c8" stroke="#101010"/><rect x="4" y="3" width="7" height="5" fill="#0018f8" stroke="#101010" stroke-width="0.8"/><rect x="5.5" y="5" width="5" height="1.2" fill="#20a8a0"/><path d="M1 9.5 H14.5 V14.5 H1 Z" fill="#c4c4c4" stroke="#101010"/><path d="M12 10 V14" stroke="#808080"/><path d="M3 7 L10.5 15" stroke="#000" stroke-width="2.6"/><path d="M3 7 L10.5 15" stroke="#ffff00" stroke-width="1.6"/><circle cx="2.6" cy="6.5" r="2.3" fill="#ffff00" stroke="#707000" stroke-width="0.6"/><circle cx="2.4" cy="6.3" r="0.8" fill="#a0a0c0"/></symbol>

<symbol id="i-qos" overflow="visible"><rect x="1" y="9" width="3" height="7" fill="#000"/><rect x="5" y="2" width="3" height="14" fill="#000"/><rect x="9" y="5" width="3" height="11" fill="#000"/><rect x="13" y="6" width="3" height="10" fill="#000"/><rect x="0" y="8" width="3" height="7" fill="#2a9af0"/><rect x="4" y="1" width="3" height="14" fill="#50c850"/><rect x="8" y="4" width="3" height="11" fill="#ff8a58"/><rect x="12" y="5" width="3" height="10" fill="#2a9af0"/></symbol>

<symbol id="i-bin" overflow="visible"><path d="M1.5 0.5 H10.5 L13.5 3.5 V13.5 L11.5 11.5 H8 Q6 13.5 4 11.5 H1.5 Z" fill="#fff" stroke="#a4a4a4"/><path d="M10.5 0.5 V3.5 H13.5" fill="none" stroke="#b8b8b8"/><rect x="3" y="2" width="1" height="4" fill="#8682a8"/><rect x="5.5" y="2.5" width="2" height="3" rx="0.7" fill="none" stroke="#8682a8"/><rect x="3.5" y="7.5" width="2" height="3" rx="0.7" fill="none" stroke="#8682a8"/><rect x="7" y="7" width="1" height="4" fill="#8682a8"/><rect x="9.5" y="7.5" width="2" height="3" rx="0.7" fill="none" stroke="#8682a8"/></symbol>
<symbol id="i-binsel" overflow="visible"><path d="M1.5 0.5 H10.5 L13.5 3.5 V13.5 L11.5 11.5 H8 Q6 13.5 4 11.5 H1.5 Z" fill="#a8d0fa" stroke="#5a98e0"/><rect x="3" y="2" width="1" height="4" fill="#5a86c8"/><rect x="5.5" y="2.5" width="2" height="3" rx="0.7" fill="none" stroke="#5a86c8"/><rect x="3.5" y="7.5" width="2" height="3" rx="0.7" fill="none" stroke="#5a86c8"/><rect x="7" y="7" width="1" height="4" fill="#5a86c8"/><rect x="9.5" y="7.5" width="2" height="3" rx="0.7" fill="none" stroke="#5a86c8"/></symbol>

<symbol id="i-srv" overflow="visible"><rect x="1" y="-1" width="7" height="10" fill="url(#gTow)" stroke="#8a96a2" stroke-width="0.6"/><rect x="2" y="0" width="5.5" height="2.5" fill="#e8f2f2"/><rect x="3" y="0.2" width="3" height="0.9" fill="#203848"/><rect x="2" y="3.5" width="5.5" height="2" fill="#e8f2f2"/><rect x="7.5" y="0" width="6.5" height="13.5" fill="url(#gTow)" stroke="#8a96a2" stroke-width="0.6"/><rect x="8.5" y="1" width="5" height="2.5" fill="#e8f2f2"/><rect x="9.5" y="1.2" width="3" height="0.9" fill="#203848"/><rect x="8.5" y="4.5" width="5" height="2" fill="#e8f2f2"/><rect x="11" y="11" width="2" height="2" fill="#30d030"/><rect x="0.5" y="5.5" width="6.5" height="7" fill="#fcf0c0" stroke="#c8c0a0" stroke-width="0.8"/><path d="M2 8.5h3M2 10.5h3" stroke="#8080a8"/><rect x="-1" y="12.5" width="7.5" height="2" rx="1" fill="#f0dc98" stroke="#a89868" stroke-width="0.6"/></symbol>

<symbol id="i-back" overflow="visible"><path d="M0.6 8.3 L7.6 1.4 V5.3 H15.3 V11.4 H7.6 V15.2 Z" fill="url(#gBack)" stroke="#3a98e0" stroke-linejoin="round"/></symbol>
<symbol id="i-fwd" overflow="visible"><path d="M15.4 8.3 L8.4 1.4 V5.3 H0.7 V11.4 H8.4 V15.2 Z" fill="url(#gFwd)" stroke="#585858" stroke-linejoin="round"/></symbol>

<symbol id="i-up" overflow="visible"><path d="M7.5 5.5 V3.8 Q7.5 3.5 8 3.5 H13 Q13.5 3.5 13.5 4 V5.5 Z" fill="#fff" stroke="#c9a75e"/><rect x="10.5" y="4" width="2.4" height="1.2" fill="#4d94e8"/><path d="M0.5 15.5 V4.2 Q0.5 3.5 1.2 3.5 H5.3 L7.2 6.5 H13.5 V15.5 Z" fill="url(#gFold)" stroke="#c9a75e"/><path d="M2 11.8 Q2.5 7.5 5.5 5.2 L4 5.2 L6.8 1 L9.2 5.2 L7.6 5.2 Q5 8 2 11.8 Z" fill="#48d048" stroke="#2a9a2a" stroke-width="0.7" stroke-linejoin="round"/></symbol>

<symbol id="i-tree" overflow="visible"><rect x="0.5" y="0.5" width="15" height="12" fill="#fff" stroke="#8c8c8c"/><rect x="1" y="1" width="14" height="2.5" fill="#d4d8e0"/><rect x="2" y="1.5" width="9" height="1" fill="#fff"/><rect x="12" y="1.5" width="1" height="1" fill="#fff"/><rect x="13.5" y="1.5" width="1" height="1" fill="#fff"/><path d="M1 4 H15" stroke="#9a9a9a"/><path d="M5.5 4 V12.5" stroke="#9a9a9a"/><path d="M2 6.5h2M2 8.5h2M2 10.5h2" stroke="#3a78c8" stroke-width="1"/><path d="M11 5.5 L8 8.5 L11 11.5 Z" fill="#30b030"/></symbol>

<symbol id="i-delete" overflow="visible"><path d="M2.6 2.6 L13.4 13.4 M13.4 2.6 L2.6 13.4" stroke="#2a2a2a" stroke-width="4.2" stroke-linecap="round"/><path d="M3 3 L13 13 M13 3 L3 13" stroke="#6a6a6a" stroke-width="1.2" stroke-linecap="round" opacity="0.7"/></symbol>

<symbol id="i-props" overflow="visible"><rect x="0.5" y="0.5" width="14" height="15" rx="1" fill="#fafafa" stroke="#7c7c7c"/><rect x="1" y="1" width="13" height="2" fill="#e6e6e6"/><rect x="12" y="1" width="1.5" height="1.5" fill="#4a6a9a"/><path d="M2.5 4.5 H12.5 V12.5 H2.5 Z" fill="#fff" stroke="#9a9a9a"/><path d="M5.5 4.5 V6.5 H12.5" fill="none" stroke="#9a9a9a"/><rect x="6.5" y="5" width="2" height="1" fill="#e0e0e0"/><rect x="9.5" y="5" width="2" height="1" fill="#e0e0e0"/><rect x="3.6" y="7.6" width="1.6" height="1.6" rx="0.8" fill="#18b0f8"/><rect x="3.8" y="9.8" width="1.2" height="1.2" fill="#a0a0a0"/><path d="M6 8.5 H11 M6 10.5 H11" stroke="#a4a4a4"/><rect x="6" y="13.5" width="3.5" height="1.8" fill="#20b8f8"/><rect x="10" y="13.5" width="3" height="1.8" fill="#c8c8c8"/></symbol>

<symbol id="i-export" overflow="visible"><path d="M0.5 0.5 H10 L12.5 3 V15.5 H0.5 Z" fill="#fcf6d8" stroke="#a4a4a0"/><path d="M10 0.5 V3 H12.5" fill="#fff" stroke="#b8b8b0"/><rect x="2.7" y="5.7" width="1.5" height="1.5" rx="0.6" fill="#1a1a1a"/><rect x="2.7" y="8.7" width="1.5" height="1.5" rx="0.6" fill="#1a1a1a"/><rect x="2.7" y="11.7" width="1.5" height="1.5" rx="0.6" fill="#1a1a1a"/><path d="M5 6.5 H10 M5 9.5 H9 M5 12.5 H9" stroke="#7472a8"/><path d="M8 8.2 H11.5 V6 L16 10.4 L11.5 14.8 V12.6 H8 Z" fill="#48d048" stroke="#30a830" stroke-width="0.6" stroke-linejoin="round"/></symbol>

<symbol id="i-help" overflow="visible"><rect x="0" y="0" width="13" height="16" fill="url(#gHelp)"/><rect x="0.5" y="0.5" width="12" height="15" fill="none" stroke="#1c348c"/><rect x="0" y="0" width="2.5" height="16" fill="#1a3a98"/><path d="M5 4.9 Q5 2.6 7.3 2.6 Q9.6 2.6 9.6 4.9 Q9.6 6.4 8.3 7.1 Q7.2 7.8 7.2 9.6" fill="none" stroke="#fff" stroke-width="1.7"/><rect x="6.3" y="11" width="1.9" height="1.9" fill="#fff"/></symbol>

<symbol id="i-action" overflow="visible"><rect x="0.5" y="0.5" width="15" height="12" fill="#fff" stroke="#8c8c8c"/><rect x="1" y="1" width="14" height="2.5" fill="#d4d8e0"/><rect x="2" y="1.5" width="9" height="1" fill="#fff"/><rect x="12" y="1.5" width="1" height="1" fill="#fff"/><rect x="13.5" y="1.5" width="1" height="1" fill="#fff"/><path d="M1 4 H15" stroke="#9a9a9a"/><path d="M10.5 4 V12.5" stroke="#9a9a9a"/><path d="M12 6.5h2M12 8.5h2M12 10.5h2" stroke="#3a78c8" stroke-width="1"/><path d="M4 5.5 L7 8.5 L4 11.5 Z" fill="#30b030"/></symbol>

</defs></svg>
</body></html>
